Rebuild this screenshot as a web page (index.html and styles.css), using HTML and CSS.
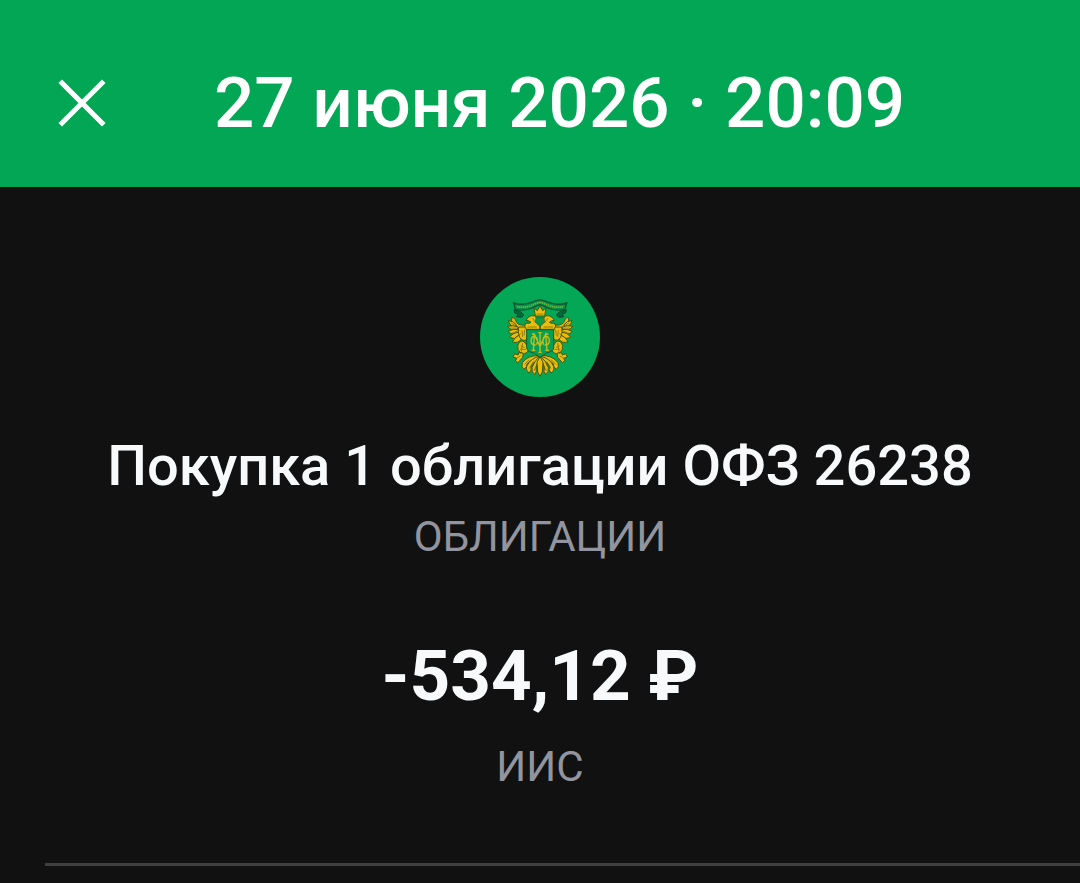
FILE: index.html
```html
<!DOCTYPE html>
<html lang="ru">
<head>
<meta charset="utf-8">
<meta name="viewport" content="width=device-width, initial-scale=1">
<title>Операция</title>
<link rel="stylesheet" href="styles.css">
</head>
<body>
<header class="top-bar">
  <button class="close" type="button" aria-label="Закрыть">
    <svg viewBox="0 0 44 44" width="44" height="44" aria-hidden="true"><path d="M2 2 42 42M42 2 2 42"/></svg>
  </button>
  <h1 class="date">27 июня 2026 · 20:09</h1>
</header>
<main class="details">
  <svg class="logo" viewBox="30 30 360 360" role="img" aria-label="Министерство финансов">
    <defs>
      <g id="half">
        <!-- wing -->
        <g class="feather">
          <path d="M174 188Q148 192 133 180Q120 168 127 150Q137 154 140 167Q150 178 174 173Z"/>
          <path d="M135 180Q119 177 115 161Q129 160 140 174Z"/>
          <path d="M142 190Q122 192 113 178Q128 173 145 180Z"/>
          <path d="M145 199Q126 207 114 193Q128 184 148 188Z"/>
          <path d="M149 208Q133 220 119 209Q130 196 149 195Z"/>
          <path d="M156 214Q144 232 127 224Q136 207 152 202Z"/>
          <path d="M146 180H178V194Q171 199 169 219Q156 223 149 211Q142 196 146 180Z"/>
        </g>
        <!-- head and neck -->
        <g class="feather">
          <path d="M210 187H168Q160 176 168 168Q178 171 183 166Q177 160 168 160Q173 149 184 146Q195 144 200 153Q206 161 203 169L210 176Z"/>
        </g>
        <!-- leg and claw -->
        <g class="feather">
          <path d="M148 226Q160 217 167 230L176 244Q175 258 161 260Q147 258 144 247Q141 234 148 226Z"/>
          <path d="M146 257 160 259 158 271 144 287 136 282 140 274 129 270 134 260 144 264Z"/>
        </g>
        <!-- tail -->
        <g class="feather">
          <path d="M208 266Q174 264 157 287Q153 300 161 307Q172 302 171 291Q181 276 208 277Z"/>
          <path d="M208 268Q181 274 170 298Q167 312 178 318Q186 309 183 299Q191 282 208 278Z"/>
          <path d="M209 268Q193 282 186 302Q184 316 194 323Q202 313 198 303Q201 288 210 279Z"/>
        </g>
        <path class="detail" d="M124 168 144 180M122 183 146 184M123 200 148 190M132 216 152 200M156 190 158 210M164 188 162 206M172 180 200 180M188 154 196 166M152 236 164 242M150 246 168 248M158 228 154 254M136 276 152 266M164 292 178 278M178 304 190 284M192 312 202 288"/>
        <path class="ribbon-end" d="M132 128 152 134 162 144 154 151 139 149 145 141 134 138Z"/>
      </g>
    </defs>
    <circle class="disc" cx="210" cy="210" r="180"/>
    <use href="#half"/>
    <use href="#half" transform="matrix(-1 0 0 1 421 0)"/>
    <path class="feather" d="M210 268 219 286 217 315 210 328 203 315 201 286Z"/>
    <path class="shield" d="M170 188H251V243Q249 254 230 258L210 271L191 258Q172 254 170 243Z"/>
    <path class="crest" d="M198 152H222L224 166 210 178 196 166Z"/>
    <path class="monogram" d="M185 250H196M190 250 193 202 210 238 227 202 231 250M226 250H237M186 201H195M225 201H235M210 197V256M205 197H215M205 256H215M197 207Q183 208 183 221Q183 234 197 234M224 207Q238 208 238 221Q238 234 224 234M200 210Q205 222 200 233M221 210Q216 222 221 233"/>
    <path class="feather" d="M196 147 192 123 202 131 210 117 218 131 228 123 224 147Z"/>
    <path class="detail" d="M200 141H220"/>
    <path class="ribbon" d="M131 108Q156 116 182 107Q197 101 210 98Q223 101 238 107Q264 116 290 108L285 127Q256 133 233 123Q220 116 210 113Q200 116 187 123Q164 133 136 127Z"/>
    <path class="lettering" d="M141 119Q166 124 188 114Q201 108 210 106Q220 108 233 114Q257 124 280 119"/>
  </svg>
  <h2 class="title">Покупка 1 облигации ОФЗ 26238</h2>
  <p class="caption">ОБЛИГАЦИИ</p>
  <p class="amount">-534,12 ₽</p>
  <p class="caption account">ИИС</p>
  <hr class="divider">
</main>
</body>
</html>
```
FILE: styles.css
```css
body { margin: 0; background: #111; color: #f7f9fa; font-family: Roboto, "Noto Sans", sans-serif; }
.top-bar { display: flex; align-items: center; gap: 110px; padding: 61px 60px 42px; background: #02a654; }
.close { padding: 0; border: 0; background: none; color: #fff; width: 44px; height: 44px; }
.close svg { display: block; overflow: visible; fill: none; stroke: currentColor; stroke-width: 5; stroke-linecap: square; }
.date { margin: 0; font-size: 71px; line-height: 84px; font-weight: 500; color: #fff; white-space: nowrap; }
.details { display: flex; flex-direction: column; align-items: center; padding-top: 90px; }
.logo { display: block; width: 120px; height: 120px; }
.disc { fill: #04a756; }
.feather { fill: #e8bd0d; stroke: #48560f; stroke-width: 3; stroke-linejoin: round; }
.detail { fill: none; stroke: #6b5f10; stroke-width: 2; }
.crest { fill: #0c9c48; stroke: #48560f; stroke-width: 2; }
.shield { fill: #05a055; stroke: #1c5a2c; stroke-width: 3; }
.monogram { fill: none; stroke: #c9bd18; stroke-width: 4; }
.ribbon { fill: #07924c; stroke: #0a5533; stroke-width: 4; }
.ribbon-end { fill: #08683a; stroke: #0a4a2e; stroke-width: 3; }
.lettering { fill: none; stroke: #72b832; stroke-width: 5; stroke-dasharray: 4 2; }
.title { margin: 36px 0 0; font-size: 56px; line-height: 66px; font-weight: 500; text-align: center; }
.caption { margin: 8px 0 0; font-size: 42px; line-height: 60px; color: #92959f; }
.amount { margin: 67px 0 0; font-size: 71px; line-height: 84px; font-weight: 700; }
.account { margin-top: 19px; }
.divider { align-self: stretch; margin: 66px 0 0 45px; border: 0; border-top: 3px solid #404040; }
```
